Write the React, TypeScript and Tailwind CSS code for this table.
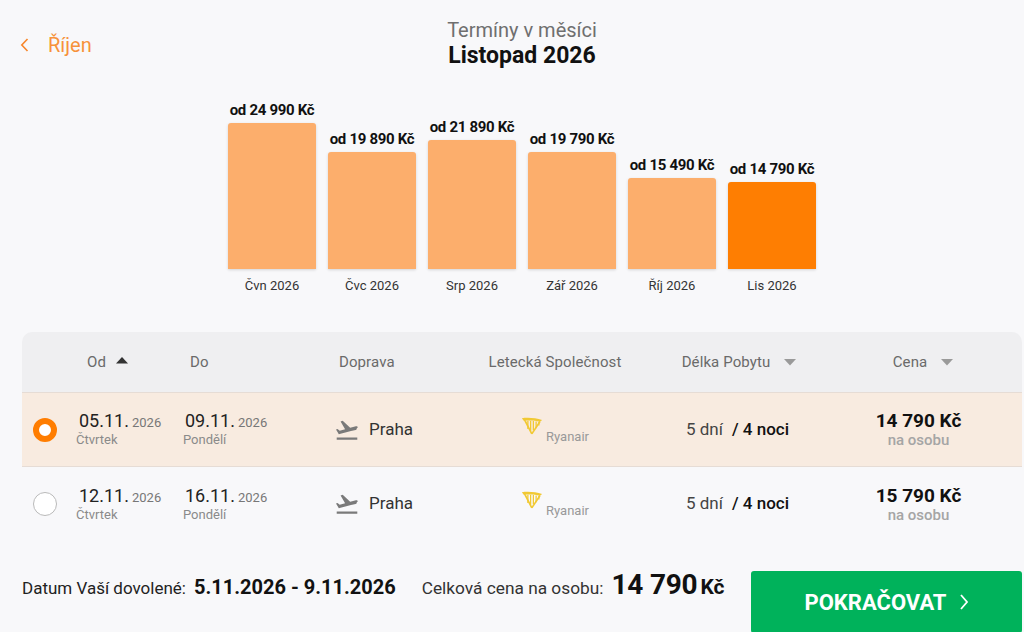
import React from 'react';

const months = [
  { label: 'Čvn 2026', price: 'od 24 990 Kč', h: 146 },
  { label: 'Čvc 2026', price: 'od 19 890 Kč', h: 117 },
  { label: 'Srp 2026', price: 'od 21 890 Kč', h: 129 },
  { label: 'Zář 2026', price: 'od 19 790 Kč', h: 117 },
  { label: 'Říj 2026', price: 'od 15 490 Kč', h: 91 },
  { label: 'Lis 2026', price: 'od 14 790 Kč', h: 87, active: true },
];

const terms = [
  { from: '05.11.', fromDay: 'Čtvrtek', to: '09.11.', toDay: 'Pondělí', price: '14 790 Kč', selected: true },
  { from: '12.11.', fromDay: 'Čtvrtek', to: '16.11.', toDay: 'Pondělí', price: '15 790 Kč', selected: false },
];

function CaretDown() {
  return (
    <svg width="12" height="7" viewBox="0 0 12 7" className="ml-[14px]">
      <path d="M0 0h12L6 6.5z" fill="#9a9a9a" />
    </svg>
  );
}

function PlaneIcon() {
  return (
    <svg width="26" height="26" viewBox="0 0 24 24">
      <path
        fill="#7a7a7a"
        d="M2.5 19h19v2h-19zm19.57-9.36c-.21-.8-1.04-1.28-1.84-1.06L14.92 10l-6.9-6.43-1.93.51 4.14 7.17-4.97 1.33-1.97-1.54-1.45.39 1.82 3.16.77 1.33 1.6-.43 5.31-1.42 4.35-1.16L19.97 12c.8-.23 1.27-1.05 1.07-1.85z"
      />
    </svg>
  );
}

// harp-like airline mark
function RyanairLogo() {
  return (
    <svg width="22" height="22" viewBox="0 0 24 24">
      <path d="M1 3.5C7 2.5 16 3 23 5.5l-2.4 2C15 5.8 8 5.6 3.5 6.5z" fill="#f1c933" />
      <path d="M1 3.5l2.5 3L11 21l1.6-.8L5.5 6.2z" fill="#f1c933" />
      <path d="M7.5 6.2v9M10.5 6.3v11M13.5 6.6v10M16.5 7v7.5M19.5 7.5v4" stroke="#f1c933" strokeWidth="1.4" />
      <path d="M20.6 7.4L11.8 20.6" stroke="#f1c933" strokeWidth="1.8" />
    </svg>
  );
}

export default function App() {
  return (
    <div className="w-full h-[632px] overflow-hidden bg-[#f8f8fa] font-['Roboto',sans-serif]">
      <div className="ml-[22px] w-[1000px]">
        {/* Header */}
        <div className="relative pt-[17px] text-center">
          <div className="text-[20px] leading-[26px] text-[#6f6f6f]">Termíny v měsíci</div>
          <div className="text-[23px] leading-[26px] font-bold text-[#111]">Listopad 2026</div>
          <button className="absolute left-[-2px] top-[32px] flex items-center gap-[19px] text-[20px] leading-[26px] text-[#f7923a]">
            <svg width="9" height="14" viewBox="0 0 9 14">
              <path d="M7.5 1L1.8 7l5.7 6" fill="none" stroke="#f7862a" strokeWidth="1.6" />
            </svg>
            Říjen
          </button>
        </div>

        {/* Month chart */}
        <div className="mt-[32px] flex items-end justify-center gap-[12px]">
          {months.map((m) => (
            <div key={m.label} className="w-[88px] flex flex-col items-center">
              <div className="text-[15px] leading-[18px] font-bold text-[#111] tracking-[-0.3px] mb-[4px] whitespace-nowrap">
                {m.price}
              </div>
              <div
                className={`w-full rounded-t-[3px] shadow-[0_1px_3px_rgba(0,0,0,0.15)] ${m.active ? 'bg-[#fe7e02]' : 'bg-[#fcae6c]'}`}
                style={{ height: m.h }}
              />
              <div className="mt-[8px] text-[13px] leading-[18px] text-[#333]">{m.label}</div>
            </div>
          ))}
        </div>

        {/* Terms table */}
        <div className="mt-[37px] rounded-t-[10px] overflow-hidden">
          <div className="flex h-[61px] items-center bg-[#efeff1] border-b border-[#e6dcd5] text-[15px] text-[#6a6a6a] tracking-[0.1px]">
            <div className="w-[54px]" />
            <div className="w-[107px] pl-[11px] flex items-center">
              Od
              <svg width="12" height="7" viewBox="0 0 12 7" className="ml-[10px] mb-[4px]">
                <path d="M0 6.5h12L6 0z" fill="#333" />
              </svg>
            </div>
            <div className="w-[117px] pl-[7px]">Do</div>
            <div className="w-[150px] pl-[39px]">Doprava</div>
            <div className="w-[210px] text-center">Letecká Společnost</div>
            <div className="w-[155px] flex items-center justify-center pl-[3px]">
              Délka Pobytu
              <CaretDown />
            </div>
            <div className="w-[207px] flex items-center justify-center pl-[9px]">
              Cena
              <CaretDown />
            </div>
          </div>

          {terms.map((t, i) => (
            <div
              key={t.from}
              className={`flex h-[74px] items-center ${i === 0 ? 'border-b border-[#e6dcd5]' : ''} ${t.selected ? 'bg-[#f8ebe0]' : 'bg-[#f8f8fa]'}`}
            >
              <div className="w-[54px] pl-[11px]">
                {t.selected ? (
                  <div className="w-[24px] h-[24px] rounded-full border-[6px] border-[#ff7d00] bg-white" />
                ) : (
                  <div className="w-[24px] h-[24px] rounded-full border border-[#b9b9b9] bg-white" />
                )}
              </div>
              <div className="w-[107px]">
                <div className="pl-[3px] leading-[18px]">
                  <span className="text-[18px] text-[#222]">{t.from}</span>
                  <span className="ml-[3px] text-[13px] text-[#777]">2026</span>
                </div>
                <div className="text-[13px] leading-[15px] text-[#8a8a8a]">{t.fromDay}</div>
              </div>
              <div className="w-[117px]">
                <div className="pl-[2px] leading-[18px]">
                  <span className="text-[18px] text-[#222]">{t.to}</span>
                  <span className="ml-[3px] text-[13px] text-[#777]">2026</span>
                </div>
                <div className="text-[13px] leading-[15px] text-[#8a8a8a]">{t.toDay}</div>
              </div>
              <div className="w-[150px] pl-[34px] flex items-center gap-[9px]">
                <PlaneIcon />
                <span className="text-[17px] text-[#333]">Praha</span>
              </div>
              <div className="w-[210px] flex items-end justify-center gap-[3px]">
                <div className="mb-[8px]">
                  <RyanairLogo />
                </div>
                <span className="text-[13px] leading-[16px] text-[#999]">Ryanair</span>
              </div>
              <div className="w-[155px] text-center text-[17px] whitespace-nowrap">
                <span className="text-[#444]">5 dní</span>
                <span className="ml-[9px] font-medium text-[#111]">/ 4 noci</span>
              </div>
              <div className="w-[207px] text-center">
                <div className="text-[19px] leading-[22px] font-bold text-[#111]">{t.price}</div>
                <div className="text-[15px] leading-[17px] font-medium text-[#a5a5a5]">na osobu</div>
              </div>
            </div>
          ))}
        </div>

        {/* Footer */}
        <div className="mt-[30px] flex items-start">
          <div className="flex items-baseline whitespace-nowrap leading-none">
            <span className="text-[17px] text-[#222]">Datum Vaší dovolené:</span>
            <span className="ml-[8px] text-[20px] font-bold text-[#111]">5.11.2026 - 9.11.2026</span>
            <span className="ml-[26px] text-[17.3px] text-[#333]">Celková cena na osobu:</span>
            <span className="ml-[8px] text-[28px] font-bold text-[#111] tracking-[-0.2px]">14 790</span>
            <span className="ml-[3px] text-[21px] font-bold text-[#111]">Kč</span>
          </div>
          <button className="ml-auto w-[271px] h-[62px] rounded-[3px] bg-[#00b25b] flex items-center justify-center gap-[12px] text-white text-[22px] font-bold">
            POKRAČOVAT
            <svg width="10" height="18" viewBox="0 0 10 18">
              <path d="M2 2l6 7-6 7" fill="none" stroke="#fff" strokeWidth="1.8" />
            </svg>
          </button>
        </div>
      </div>
    </div>
  );
}
